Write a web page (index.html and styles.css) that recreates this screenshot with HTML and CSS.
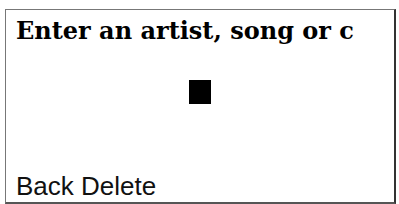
FILE: index.html
```html
<!DOCTYPE html>
<html lang="en">
<head>
  <meta charset="UTF-8" />
  <title>Search</title>
  <link rel="stylesheet" href="styles.css">
</head>
<body>

<div class="screen">
  <div class="prompt">Enter an artist, song or c</div>
  <div class="entry">
    <span class="cursor"></span>
  </div>
  <div class="softkeys">Back Delete</div>
</div>

</body>
</html>
```

FILE: styles.css
```css
body {
  margin: 0;
  padding: 9px 0 0 5px;
  background: #fff;
}

.screen {
  width: 388px;
  height: 192px;
  border: 1px solid #777;
  border-right: 2px solid #333;
  border-bottom: 2px solid #555;
  display: flex;
  flex-direction: column;
  overflow: hidden;
  color: #000;
}

.prompt {
  font-family: "DejaVu Serif", serif;
  font-weight: bold;
  font-size: 24px;
  line-height: 28px;
  padding: 7px 0 0 10px;
  white-space: nowrap;
}

.entry {
  flex: 1;
  display: flex;
  justify-content: center;
  padding-top: 35px;
}

.cursor {
  display: block;
  width: 22px;
  height: 24px;
  background: #000;
}

.softkeys {
  font-family: "Liberation Sans", Arial, sans-serif;
  font-size: 26px;
  line-height: 30px;
  padding: 0 0 1px 10px;
  color: #111;
}
```
